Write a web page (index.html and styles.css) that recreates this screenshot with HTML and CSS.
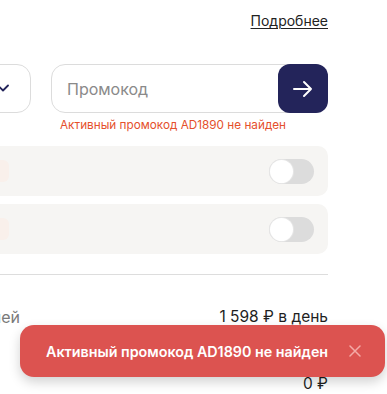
FILE: index.html
```html
<!DOCTYPE html>
<html lang="ru">
<head>
<meta charset="utf-8">
<link rel="stylesheet" href="styles.css">
</head>
<body>
<div class="page">
  <div class="top">
    <a class="more" href="#">Подробнее</a>
  </div>
  <div class="promo-row">
    <div class="select">
      <svg class="chev" width="14" height="10" viewBox="0 0 14 10"><path d="M2 2.5 L7 7.5 L12 2.5" fill="none" stroke="#23245a" stroke-width="1.8" stroke-linecap="round" stroke-linejoin="round"/></svg>
    </div>
    <div class="promo">
      <div class="input">Промокод</div>
      <button class="go" type="button">
        <svg width="22" height="18" viewBox="0 0 22 18"><path d="M2 9 H19 M12 2 L19 9 L12 16" fill="none" stroke="#fff" stroke-width="2" stroke-linecap="round" stroke-linejoin="round"/></svg>
      </button>
      <div class="err">Активный промокод AD1890 не найден</div>
    </div>
  </div>
  <div class="options">
    <div class="opt"><span class="ico"></span><span class="toggle"></span></div>
    <div class="opt"><span class="ico"></span><span class="toggle"></span></div>
  </div>
  <div class="divider"></div>
  <div class="summary">
    <div class="line"><span class="label">Итого для всех дней</span><span class="val">1 598 ₽ в день</span></div>
    <div class="line"><span class="label short">Скидка</span><span class="val">0 ₽</span></div>
  </div>
</div>
<div class="toast">
  <span class="toast-text">Активный промокод AD1890 не найден</span>
  <svg class="close" width="12" height="12" viewBox="0 0 12 12"><path d="M1 1 L11 11 M11 1 L1 11" fill="none" stroke="#f4aaa6" stroke-width="1.5" stroke-linecap="round"/></svg>
</div>
</body>
</html>
```

FILE: styles.css
```css
* { box-sizing: border-box; }
html, body { margin: 0; padding: 0; background: #fff; overflow: hidden; }
body {
  font-family: Inter, "Noto Sans", sans-serif;
  color: #1f1f1f;
  width: 387px;
  height: 394px;
  position: relative;
}
.page {
  margin-left: -160px;
  width: 488px;
  padding-top: 11px;
}
.top {
  display: flex;
  justify-content: flex-end;
  height: 20px;
}
.more {
  font-size: 14px;
  line-height: 20px;
  color: #222;
  text-decoration: underline;
  text-underline-offset: 2px;
  text-decoration-thickness: 1px;
}
.promo-row {
  margin-top: 33px;
  display: flex;
  gap: 20px;
}
.select {
  width: 191px;
  height: 49px;
  border: 1px solid #dcdcdc;
  border-radius: 14px;
  display: flex;
  align-items: center;
  justify-content: flex-end;
  padding-right: 20px;
}
.chev { margin-top: -2px; }
.promo {
  flex: 1;
  position: relative;
}
.input {
  height: 49px;
  border: 1px solid #dcdcdc;
  border-radius: 14px;
  padding-left: 15px;
  display: flex;
  align-items: center;
  font-size: 16px;
  color: #8a8a8a;
}
.go {
  position: absolute;
  right: 0;
  top: 0;
  width: 50px;
  height: 49px;
  border: 0;
  border-radius: 12px;
  background: #23245a;
  display: flex;
  align-items: center;
  justify-content: center;
  padding: 0;
}
.err {
  margin-top: 4px;
  padding-left: 9px;
  font-size: 11.75px;
  line-height: 16px;
  color: #e5502c;
}
.options {
  margin-top: 13px;
  display: flex;
  flex-direction: column;
  gap: 8px;
}
.opt {
  height: 50px;
  background: #f6f5f3;
  border-radius: 10px;
  display: flex;
  align-items: center;
  justify-content: space-between;
  padding-right: 14px;
}
.ico {
  width: 14px;
  height: 22px;
  margin-left: 155px;
  border-radius: 6px;
  background: #f9f0eb;
}
.toggle {
  width: 45px;
  height: 25px;
  border-radius: 13px;
  background: #dcdcdc;
  position: relative;
}
.toggle::after {
  content: "";
  position: absolute;
  left: 1px;
  top: 1px;
  width: 23px;
  height: 23px;
  border-radius: 50%;
  background: #fff;
  box-shadow: 0 0 0 1px #e6e6e6;
}
.divider {
  margin-top: 20px;
  height: 1px;
  background: #dddddd;
}
.summary {
  margin-top: 31px;
}
.line {
  display: flex;
  justify-content: space-between;
  align-items: center;
  height: 22px;
  font-size: 16px;
  line-height: 22px;
  margin-bottom: 45px;
}
.label {
  flex: 0 0 180px;
  text-align: right;
  white-space: nowrap;
  overflow: hidden;
  color: #7a7a7a;
}
.label.short { text-align: left; }
.val { color: #1f1f1f; font-size: 15.5px; }
.toast {
  position: absolute;
  left: 20px;
  top: 325px;
  width: 365px;
  height: 52px;
  background: #dc5350;
  border-radius: 14px;
  box-shadow: 0 5px 12px rgba(0,0,0,0.18);
  display: flex;
  align-items: center;
  padding-left: 26px;
}
.toast-text {
  color: #fff;
  font-size: 14.3px;
  font-weight: 600;
  white-space: nowrap;
}
.close { margin-left: 21px; }
```
